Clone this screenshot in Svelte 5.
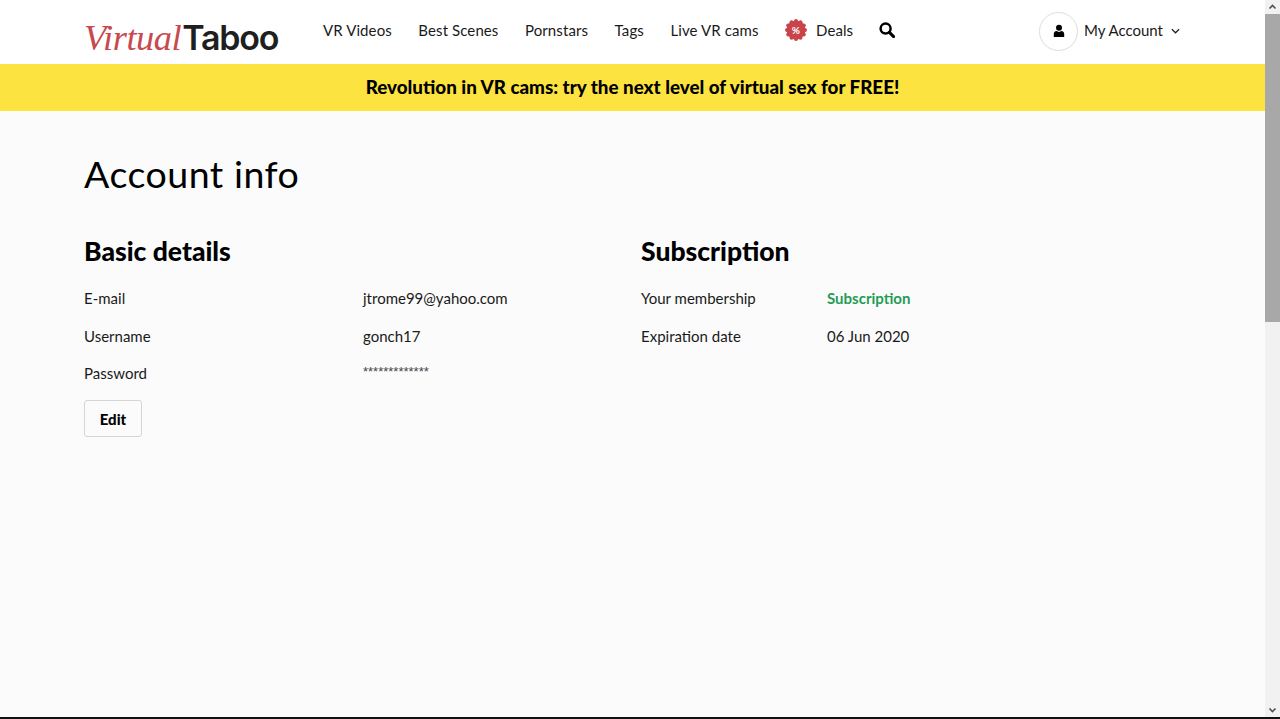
<script>
  const navItems = ["VR Videos", "Best Scenes", "Pornstars", "Tags", "Live VR cams"];
  const basic = [
    { label: "E-mail", value: "jtrome99@yahoo.com" },
    { label: "Username", value: "gonch17" },
    { label: "Password", value: "*************", secret: true },
  ];
  // scallops round the deals badge
  const scallops = Array.from({ length: 12 }, (_, i) => {
    const a = (i * Math.PI) / 6;
    return { x: 11 + 9 * Math.cos(a), y: 11 + 9 * Math.sin(a) };
  });
</script>

<div class="window">
  <div class="page">
    <header class="top">
      <a class="logo" href="#home"><span class="virtual">Virtual</span><span class="taboo">Taboo</span></a>
      <nav class="nav">
        {#each navItems as item}
          <a href="#nav">{item}</a>
        {/each}
        <a class="deals" href="#deals">
          <svg viewBox="0 0 22 22" width="22" height="22">
            <circle cx="11" cy="11" r="9.5" fill="#c9444a" />
            {#each scallops as s}
              <circle cx={s.x} cy={s.y} r="2" fill="#c9444a" />
            {/each}
            <text x="11" y="14.5" text-anchor="middle" class="percent">%</text>
          </svg>
          Deals
        </a>
        <a class="search" href="#search" aria-label="Search">
          <svg viewBox="0 0 16 16" width="16" height="16">
            <circle cx="6.6" cy="6.6" r="5" fill="none" stroke="#000" stroke-width="2.5" />
            <path d="M10.4 10.4 14.6 14.6" stroke="#000" stroke-width="3" stroke-linecap="round" />
          </svg>
        </a>
      </nav>
      <div class="account">
        <span class="avatar">
          <svg viewBox="0 0 12 13" width="12" height="14">
            <circle cx="6" cy="3.2" r="3" fill="#000" />
            <path d="M0.8 12.6V9.4C0.8 7.6 2 6.6 3.4 6.4L6 7.6 8.6 6.4C10 6.6 11.2 7.6 11.2 9.4V12.6Z" fill="#000" />
          </svg>
        </span>
        <span class="account-name">My Account</span>
        <svg class="caret" viewBox="0 0 10 6" width="9" height="6">
          <path d="M1 1 5 5 9 1" fill="none" stroke="#222" stroke-width="1.4" />
        </svg>
      </div>
    </header>

    <div class="promo">Revolution in VR cams: try the next level of virtual sex for FREE!</div>

    <main class="content">
      <h1>Account info</h1>
      <div class="columns">
        <section class="basic">
          <h2>Basic details</h2>
          {#each basic as row}
            <div class="row">
              <span class="label">{row.label}</span>
              <span class:secret={row.secret}>{row.value}</span>
            </div>
          {/each}
          <button class="edit">Edit</button>
        </section>
        <section class="subscription">
          <h2>Subscription</h2>
          <div class="row">
            <span class="label">Your membership</span>
            <span class="plan">Subscription</span>
          </div>
          <div class="row">
            <span class="label">Expiration date</span>
            <span>06 Jun 2020</span>
          </div>
        </section>
      </div>
    </main>
  </div>

  <div class="scrollbar">
    <svg viewBox="0 0 15 14" width="15" height="14"><path d="M4.5 8.5 7.5 5.5 10.5 8.5" fill="none" stroke="#505050" stroke-width="1.6" /></svg>
    <div class="thumb"></div>
    <div class="track"></div>
    <svg viewBox="0 0 15 14" width="15" height="14"><path d="M4.5 5.5 7.5 8.5 10.5 5.5" fill="none" stroke="#505050" stroke-width="1.6" /></svg>
  </div>
</div>

<style>
  :global(body) {
    margin: 0;
    overflow: hidden;
  }

  .window {
    display: flex;
    height: 719px;
    box-sizing: border-box;
    border-bottom: 2px solid #111;
    font-family: Lato, "Open Sans", sans-serif;
    font-size: 15px;
    color: #1a1a1a;
  }

  a {
    color: inherit;
    text-decoration: none;
  }

  .page {
    flex: 1;
    min-width: 0;
    background: #fbfbfb;
  }

  .top {
    display: flex;
    align-items: center;
    height: 64px;
    padding: 0 84px 2px;
    box-sizing: border-box;
    background: #fff;
  }

  .logo {
    display: flex;
    align-items: baseline;
    width: 239px;
    height: 64px;
    padding-top: 17px;
    box-sizing: border-box;
    white-space: nowrap;
  }

  .virtual {
    font-family: "Liberation Serif", serif;
    font-style: italic;
    font-size: 36.5px;
    letter-spacing: -0.5px;
    color: #c8494f;
  }

  .taboo {
    margin-left: 1px;
    font-family: Inter, sans-serif;
    font-weight: 600;
    font-size: 34px;
    letter-spacing: -1.2px;
    color: #1f1f1f;
  }

  .nav {
    display: flex;
    align-items: center;
    gap: 26.5px;
    height: 100%;
    margin-bottom: 2px;
    letter-spacing: 0.1px;
  }

  .deals {
    display: flex;
    align-items: center;
    gap: 9px;
  }

  .percent {
    fill: #fff;
    font-size: 10px;
    font-weight: 700;
  }

  .search {
    display: flex;
    margin-left: -1px;
  }

  .account {
    display: flex;
    align-items: center;
    gap: 5px;
    margin-left: auto;
    margin-right: 1px;
  }

  .account-name {
    margin-bottom: 2px;
  }

  .avatar {
    display: flex;
    align-items: center;
    justify-content: center;
    width: 39px;
    height: 39px;
    margin-right: 1px;
    box-sizing: border-box;
    border: 1px solid #ddd;
    border-radius: 50%;
  }

  .caret {
    margin-left: 3px;
  }

  .promo {
    height: 47px;
    line-height: 46px;
    background: #fce340;
    color: #000;
    text-align: center;
    font-weight: 900;
    font-size: 18.8px;
  }

  .content {
    padding: 41px 84px 0;
  }

  h1 {
    margin: 0;
    font-size: 37.5px;
    line-height: 44px;
    font-weight: 400;
    color: #000;
    letter-spacing: 0.5px;
  }

  .columns {
    display: flex;
    margin-top: 40px;
  }

  .basic {
    width: 557px;
  }

  .basic .label {
    width: 279px;
  }

  .subscription .label {
    width: 186px;
  }

  h2 {
    margin: 0 0 14px;
    font-size: 26.5px;
    line-height: 30px;
    font-weight: 900;
    color: #000;
  }

  .row {
    display: flex;
    height: 37.5px;
    line-height: 37.5px;
  }

  .secret {
    font-family: "Liberation Sans", sans-serif;
    font-size: 13px;
    line-height: 34px;
    color: #444;
  }

  .plan {
    color: #1f9d55;
    font-weight: 700;
  }

  .edit {
    display: block;
    width: 58px;
    height: 37px;
    margin-top: 7px;
    padding: 1px 0 0;
    border: 1px solid #d5d5d5;
    border-radius: 3px;
    background: #fbfbfb;
    font: 900 15px Lato, sans-serif;
    color: #000;
  }

  .scrollbar {
    display: flex;
    flex-direction: column;
    width: 15px;
    background: #f1f1f1;
  }

  .thumb {
    height: 308px;
    background: #a8a8a8;
  }

  .track {
    flex: 1;
  }
</style>
